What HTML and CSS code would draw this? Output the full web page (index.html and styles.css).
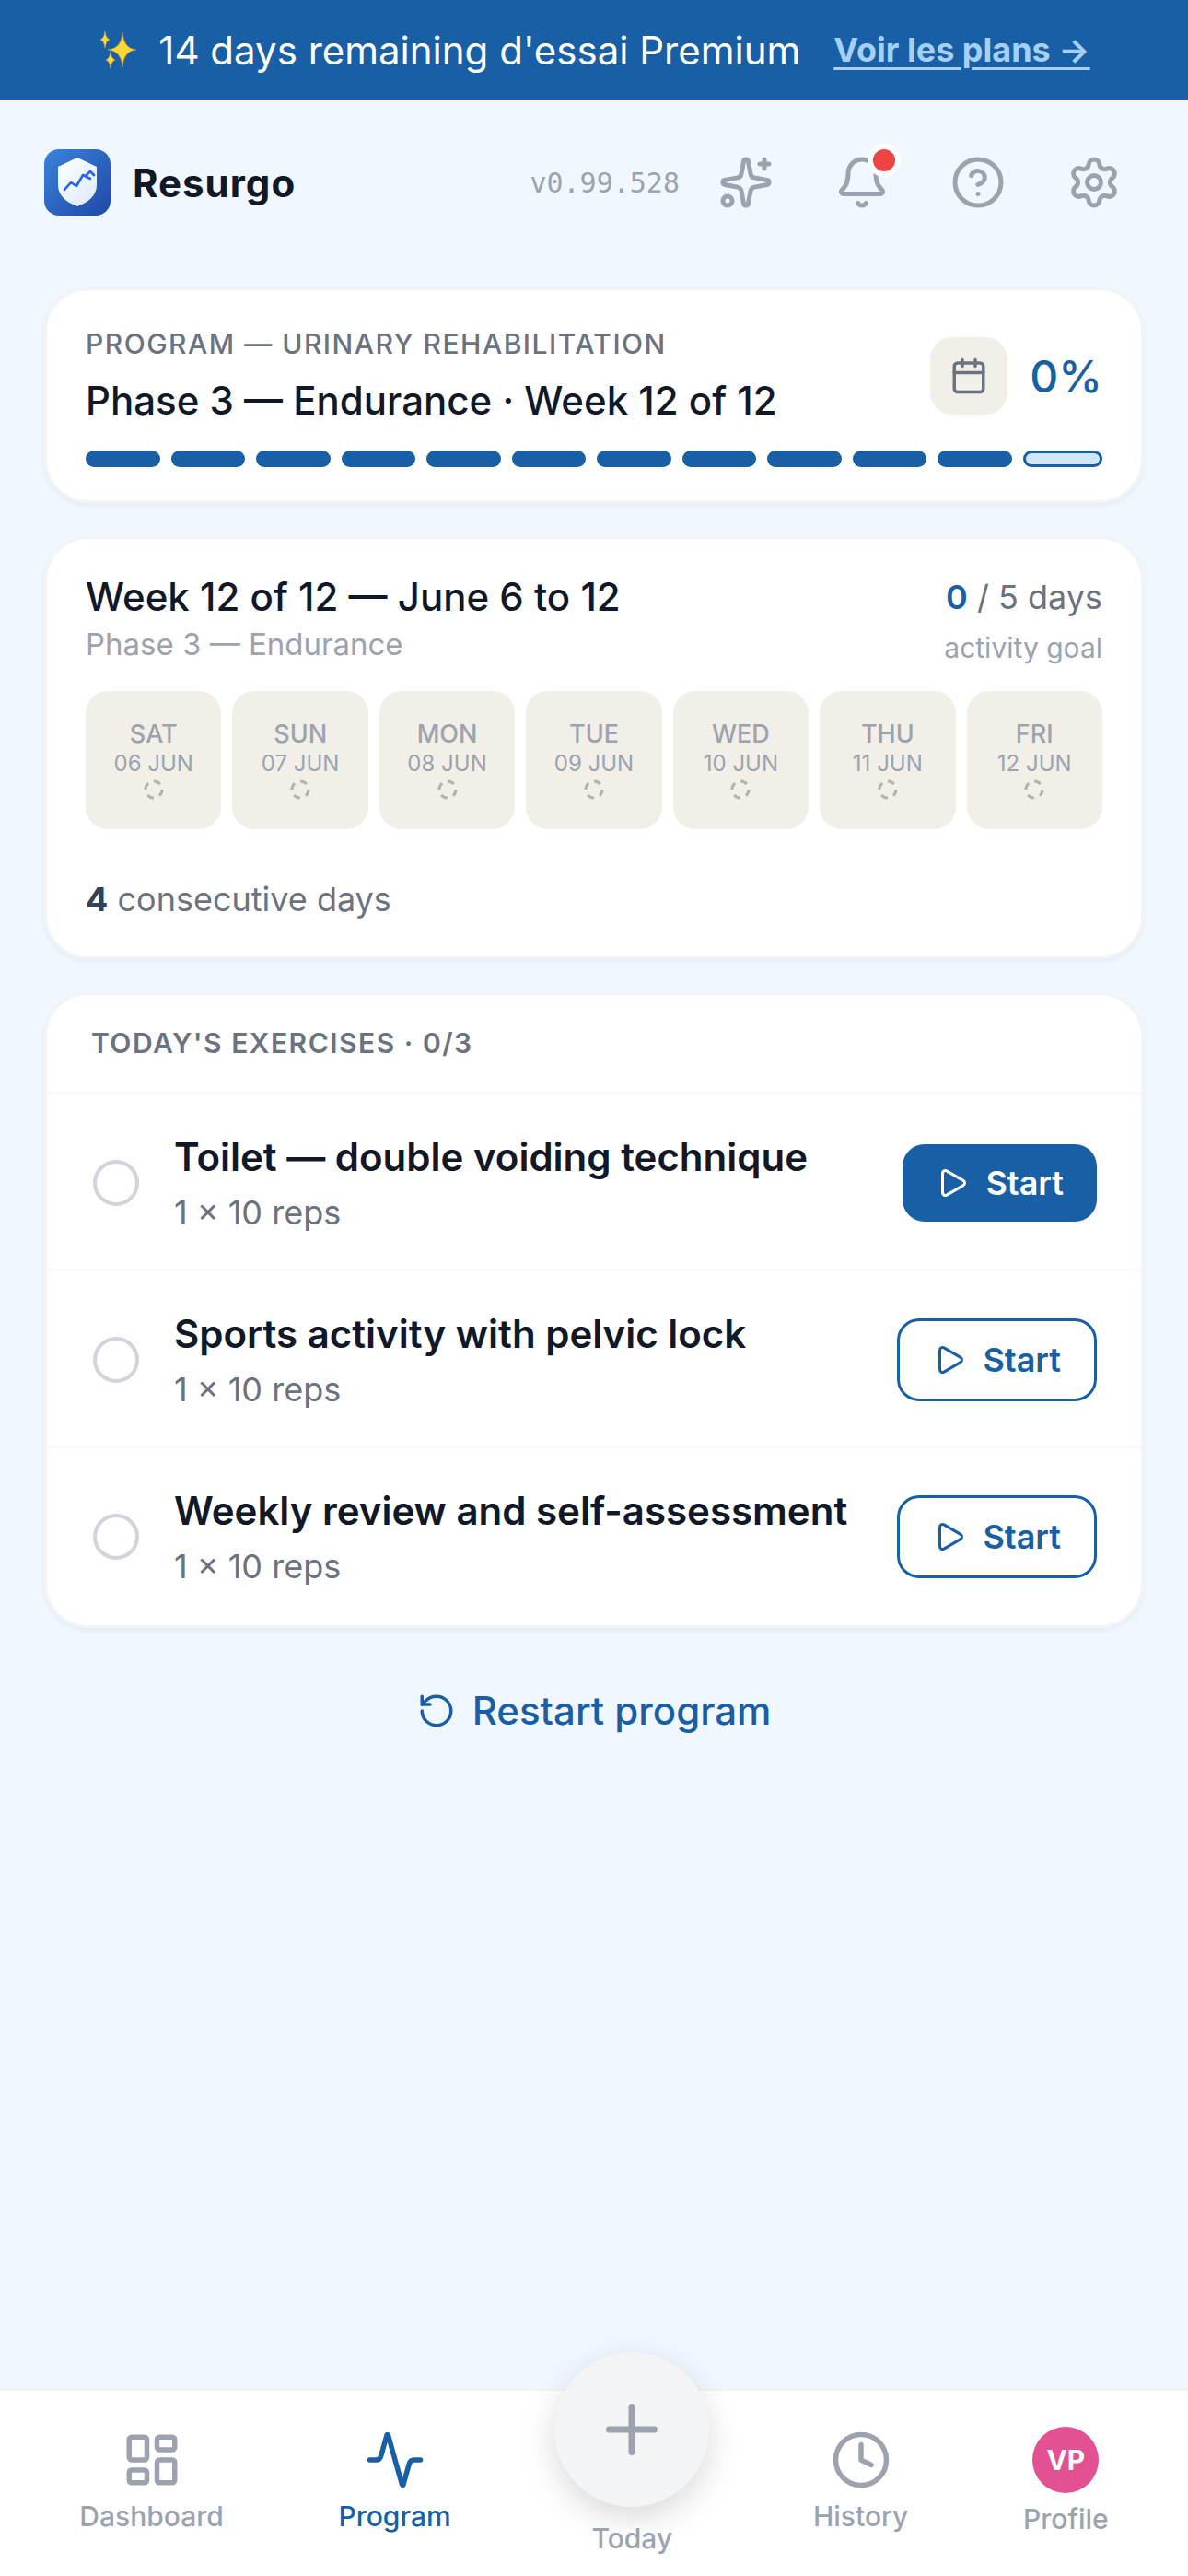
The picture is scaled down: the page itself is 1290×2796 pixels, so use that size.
FILE: index.html
```html
<!DOCTYPE html>
<html lang="en">

<head>
    <meta charset="UTF-8">
    <meta name="viewport" content="width=device-width, initial-scale=1.0">
    <title>Resurgo</title>
    <link rel="stylesheet" href="styles.css">
</head>

<body>
    <div class="banner">
        <svg class="sparkle" viewBox="0 0 42 42">
            <path d="M27 2Q28 20 42 21Q28 22 27 40Q26 22 11 21Q26 20 27 2Z" />
            <path d="M8 1Q9 9 13 10Q9 11 8 19Q7 11 3 10Q7 9 8 1Z" />
            <path d="M14 23Q15 31 19 32Q15 33 14 41Q13 33 9 32Q13 31 14 23Z" />
        </svg>
        <span>14 days remaining d'essai Premium</span>
        <a href="#">Voir les plans →</a>
    </div>

    <header class="header">
        <svg class="logo" viewBox="0 0 72 72">
            <defs>
                <linearGradient id="logoBg" x1="0" y1="0" x2="1" y2="1">
                    <stop offset="0" stop-color="#3b82de" />
                    <stop offset="1" stop-color="#1e49a6" />
                </linearGradient>
                <linearGradient id="shieldBg" x1="0" y1="0" x2="1" y2="1">
                    <stop offset="0" stop-color="#ffffff" />
                    <stop offset="1" stop-color="#dbeafe" />
                </linearGradient>
            </defs>
            <rect width="72" height="72" rx="16" fill="url(#logoBg)" />
            <path d="M36 10L57 20V40C57 52 47 59 36 63C25 59 15 52 15 40V20Z" fill="#1e3a8a" opacity=".25" />
            <path d="M36 9L57 19V39C57 51 47 58 36 62C25 58 15 51 15 39V19Z" fill="url(#shieldBg)" />
            <path d="M22 44L29 36L35 40L42 28L50 32M42 28L45 29L50 24L54 28" fill="none" stroke="#2563eb" stroke-width="2.6" stroke-linecap="round" stroke-linejoin="round" />
        </svg>
        <h1 class="brand">Resurgo</h1>
        <span class="version">v0.99.528</span>
        <button class="icon-btn" aria-label="What's new">
            <svg class="icon" viewBox="0 0 24 24">
                <path d="M11.017 2.814a1 1 0 0 1 1.966 0l1.051 5.558a2 2 0 0 0 1.594 1.594l5.558 1.051a1 1 0 0 1 0 1.966l-5.558 1.051a2 2 0 0 0-1.594 1.594l-1.051 5.558a1 1 0 0 1-1.966 0l-1.051-5.558a2 2 0 0 0-1.594-1.594l-5.558-1.051a1 1 0 0 1 0-1.966l5.558-1.051a2 2 0 0 0 1.594-1.594z" />
                <path d="M20 2v4M22 4h-4" />
                <circle cx="4" cy="20" r="2" />
            </svg>
        </button>
        <button class="icon-btn" aria-label="Notifications">
            <svg class="icon" viewBox="0 0 24 24">
                <path d="M10.268 21a2 2 0 0 0 3.464 0" />
                <path d="M3.262 15.326A1 1 0 0 0 4 17h16a1 1 0 0 0 .74-1.673C19.41 13.956 18 12.499 18 8A6 6 0 0 0 6 8c0 4.499-1.411 5.956-2.738 7.326" />
            </svg>
            <span class="dot"></span>
        </button>
        <button class="icon-btn" aria-label="Help">
            <svg class="icon" viewBox="0 0 24 24">
                <circle cx="12" cy="12" r="10" />
                <path d="M9.09 9a3 3 0 0 1 5.83 1c0 2-3 3-3 3M12 17h.01" />
            </svg>
        </button>
        <button class="icon-btn" aria-label="Settings">
            <svg class="icon" viewBox="0 0 24 24">
                <path d="M9.671 4.136a2.34 2.34 0 0 1 4.659 0 2.34 2.34 0 0 0 3.319 1.915 2.34 2.34 0 0 1 2.33 4.033 2.34 2.34 0 0 0 0 3.831 2.34 2.34 0 0 1-2.33 4.033 2.34 2.34 0 0 0-3.319 1.915 2.34 2.34 0 0 1-4.659 0 2.34 2.34 0 0 0-3.32-1.915 2.34 2.34 0 0 1-2.33-4.033 2.34 2.34 0 0 0 0-3.831A2.34 2.34 0 0 1 6.35 6.051a2.34 2.34 0 0 0 3.319-1.915" />
                <circle cx="12" cy="12" r="3" />
            </svg>
        </button>
    </header>

    <main class="main">
        <section class="card phase">
            <div class="phase-row">
                <div class="phase-text">
                    <p class="label">PROGRAM — URINARY REHABILITATION</p>
                    <h2 class="title">Phase 3 — Endurance · Week 12 of 12</h2>
                </div>
                <button class="calendar" aria-label="Calendar">
                    <svg class="icon" viewBox="0 0 24 24">
                        <path d="M8 2v4M16 2v4M3 10h18" />
                        <rect x="3" y="4" width="18" height="18" rx="2" />
                    </svg>
                </button>
                <span class="percent">0%</span>
            </div>
            <div class="bars">
                <span></span><span></span><span></span><span></span>
                <span></span><span></span><span></span><span></span>
                <span></span><span></span><span></span><span class="current"></span>
            </div>
        </section>

        <section class="card week">
            <div class="week-head">
                <div>
                    <h2 class="week-title">Week 12 of 12 — June 6 to 12</h2>
                    <p class="week-sub">Phase 3 — Endurance</p>
                </div>
                <div class="goal">
                    <p class="goal-days"><b>0</b> / 5 days</p>
                    <p class="goal-text">activity goal</p>
                </div>
            </div>
            <div class="days">
                <div class="day">
                    <span class="day-name">SAT</span>
                    <span class="day-date">06 JUN</span>
                    <svg viewBox="0 0 24 24"><circle cx="12" cy="12" r="9" /></svg>
                </div>
                <div class="day">
                    <span class="day-name">SUN</span>
                    <span class="day-date">07 JUN</span>
                    <svg viewBox="0 0 24 24"><circle cx="12" cy="12" r="9" /></svg>
                </div>
                <div class="day">
                    <span class="day-name">MON</span>
                    <span class="day-date">08 JUN</span>
                    <svg viewBox="0 0 24 24"><circle cx="12" cy="12" r="9" /></svg>
                </div>
                <div class="day">
                    <span class="day-name">TUE</span>
                    <span class="day-date">09 JUN</span>
                    <svg viewBox="0 0 24 24"><circle cx="12" cy="12" r="9" /></svg>
                </div>
                <div class="day">
                    <span class="day-name">WED</span>
                    <span class="day-date">10 JUN</span>
                    <svg viewBox="0 0 24 24"><circle cx="12" cy="12" r="9" /></svg>
                </div>
                <div class="day">
                    <span class="day-name">THU</span>
                    <span class="day-date">11 JUN</span>
                    <svg viewBox="0 0 24 24"><circle cx="12" cy="12" r="9" /></svg>
                </div>
                <div class="day">
                    <span class="day-name">FRI</span>
                    <span class="day-date">12 JUN</span>
                    <svg viewBox="0 0 24 24"><circle cx="12" cy="12" r="9" /></svg>
                </div>
            </div>
            <p class="streak"><b>4</b> consecutive days</p>
        </section>

        <section class="card exercises">
            <h3 class="ex-head">TODAY'S EXERCISES · 0/3</h3>
            <div class="ex-row">
                <input type="checkbox" id="ex1" class="check">
                <label for="ex1" class="ex-text">
                    <span class="ex-name">Toilet — double voiding technique</span>
                    <span class="ex-reps">1 × 10 reps</span>
                </label>
                <button class="start primary">
                    <svg class="icon" viewBox="0 0 24 24">
                        <path d="M5 5a2 2 0 0 1 3.008-1.728l11.997 6.998a2 2 0 0 1 .003 3.458l-12 7A2 2 0 0 1 5 19z" />
                    </svg>
                    Start
                </button>
            </div>
            <div class="ex-row">
                <input type="checkbox" id="ex2" class="check">
                <label for="ex2" class="ex-text">
                    <span class="ex-name">Sports activity with pelvic lock</span>
                    <span class="ex-reps">1 × 10 reps</span>
                </label>
                <button class="start">
                    <svg class="icon" viewBox="0 0 24 24">
                        <path d="M5 5a2 2 0 0 1 3.008-1.728l11.997 6.998a2 2 0 0 1 .003 3.458l-12 7A2 2 0 0 1 5 19z" />
                    </svg>
                    Start
                </button>
            </div>
            <div class="ex-row">
                <input type="checkbox" id="ex3" class="check">
                <label for="ex3" class="ex-text">
                    <span class="ex-name">Weekly review and self-assessment</span>
                    <span class="ex-reps">1 × 10 reps</span>
                </label>
                <button class="start">
                    <svg class="icon" viewBox="0 0 24 24">
                        <path d="M5 5a2 2 0 0 1 3.008-1.728l11.997 6.998a2 2 0 0 1 .003 3.458l-12 7A2 2 0 0 1 5 19z" />
                    </svg>
                    Start
                </button>
            </div>
        </section>

        <button class="restart">
            <svg class="icon" viewBox="0 0 24 24">
                <path d="M3 12a9 9 0 1 0 9-9 9.75 9.75 0 0 0-6.74 2.74L3 8" />
                <path d="M3 3v5h5" />
            </svg>
            Restart program
        </button>
    </main>

    <nav class="nav">
        <a href="#" class="nav-item">
            <svg class="icon" viewBox="0 0 24 24">
                <rect x="3" y="3" width="7" height="9" rx="1" />
                <rect x="14" y="3" width="7" height="5" rx="1" />
                <rect x="14" y="12" width="7" height="9" rx="1" />
                <rect x="3" y="16" width="7" height="5" rx="1" />
            </svg>
            Dashboard
        </a>
        <a href="#" class="nav-item active">
            <svg class="icon" viewBox="0 0 24 24">
                <path d="M22 12h-2.48a2 2 0 0 0-1.93 1.46l-2.35 8.36a.25.25 0 0 1-.48 0L9.24 2.18a.25.25 0 0 0-.48 0l-2.35 8.36A2 2 0 0 1 4.49 12H2" />
            </svg>
            Program
        </a>
        <a href="#" class="nav-item today">
            <span class="plus">
                <svg class="icon" viewBox="0 0 24 24">
                    <path d="M5 12h14M12 5v14" />
                </svg>
            </span>
            Today
        </a>
        <a href="#" class="nav-item">
            <svg class="icon" viewBox="0 0 24 24">
                <circle cx="12" cy="12" r="10" />
                <path d="M12 6v6l4 2" />
            </svg>
            History
        </a>
        <a href="#" class="nav-item">
            <span class="avatar">VP</span>
            Profile
        </a>
    </nav>
</body>

</html>
```
FILE: styles.css
```css
* {
    box-sizing: border-box;
    margin: 0;
    padding: 0;
}

body {
    min-height: 100vh;
    display: flex;
    flex-direction: column;
    background: #f0f7ff;
    color: #111827;
    font-family: Inter, "Liberation Sans", sans-serif;
}

button {
    border: none;
    background: none;
    font-family: inherit;
    cursor: pointer;
}

.icon {
    display: block;
    flex: none;
    fill: none;
    stroke: currentColor;
    stroke-width: 2;
    stroke-linecap: round;
    stroke-linejoin: round;
}

/* trial banner */
.banner {
    display: flex;
    align-items: center;
    justify-content: center;
    gap: 24px;
    height: 108px;
    background: #185fa5;
    color: white;
    font-size: 42px;
}

.banner a {
    margin-left: 12px;
    color: #a5d0f5;
    font-size: 36px;
    font-weight: 700;
    text-decoration-thickness: 3px;
    text-underline-offset: 6px;
}

.sparkle {
    width: 42px;
    height: 42px;
    fill: #fdd835;
    stroke: #f4a62a;
    stroke-width: 0.5;
}

/* header */
.header {
    display: flex;
    align-items: center;
    gap: 18px;
    padding: 36px 48px;
}

.logo {
    width: 72px;
    height: 72px;
}

.brand {
    flex: 1;
    padding-left: 6px;
    font-size: 42px;
    font-weight: 700;
    letter-spacing: 1px;
}

.version {
    color: #9ca3af;
    font-family: "DejaVu Sans Mono", monospace;
    font-size: 30px;
}

.icon-btn {
    position: relative;
    display: flex;
    align-items: center;
    justify-content: center;
    width: 108px;
    height: 108px;
    color: #9ca3af;
}

.icon-btn .icon {
    width: 60px;
    height: 60px;
}

.dot {
    position: absolute;
    top: 12px;
    right: 12px;
    width: 36px;
    height: 36px;
    border: 6px solid white;
    border-radius: 50%;
    background: #ef4444;
}

/* cards */
.main {
    flex: 1;
    display: flex;
    flex-direction: column;
    gap: 36px;
    padding: 24px 48px;
}

.card {
    border: 3px solid #f3f4f6;
    border-radius: 48px;
    background: white;
    box-shadow: 0 3px 6px rgba(0, 0, 0, 0.05);
}

.phase,
.week {
    padding: 36px 42px;
}

.phase-row {
    display: flex;
    align-items: center;
    gap: 24px;
    margin-bottom: 24px;
}

.phase-text {
    flex: 1;
}

.label {
    margin-bottom: 9px;
    color: #6b7280;
    font-size: 30px;
    font-weight: 500;
    line-height: 45px;
    letter-spacing: 0.05em;
}

.title {
    font-size: 42px;
    font-weight: 500;
    line-height: 60px;
}

.calendar {
    display: flex;
    align-items: center;
    justify-content: center;
    width: 84px;
    height: 84px;
    border-radius: 24px;
    background: #f1efe8;
    color: #6b7280;
}

.calendar .icon {
    width: 42px;
    height: 42px;
}

.percent {
    color: #185fa5;
    font-size: 48px;
    font-weight: 500;
}

.bars {
    display: flex;
    gap: 12px;
}

.bars span {
    flex: 1;
    height: 18px;
    border-radius: 9px;
    background: #185fa5;
}

.bars .current {
    border: 3px solid #185fa5;
    background: #d0e6fa;
}

/* week */
.week-head {
    display: flex;
    justify-content: space-between;
    margin-bottom: 24px;
}

.week-title {
    font-size: 42px;
    font-weight: 500;
    line-height: 54px;
}

.week-sub {
    color: #9ca3af;
    font-size: 33px;
    line-height: 48px;
}

.goal {
    text-align: right;
}

.goal-days {
    margin-bottom: 6px;
    color: #6b7280;
    font-size: 36px;
    line-height: 54px;
}

.goal-days b {
    color: #185fa5;
    font-weight: 600;
}

.goal-text {
    color: #9ca3af;
    font-size: 30px;
    line-height: 45px;
}

.days {
    display: flex;
    gap: 12px;
}

.day {
    flex: 1;
    display: flex;
    flex-direction: column;
    align-items: center;
    justify-content: center;
    height: 150px;
    padding-bottom: 3px;
    border-radius: 24px;
    background: #f1efe8;
    color: #9ca3af;
}

.day-name {
    font-size: 27px;
    font-weight: 500;
    line-height: 36px;
}

.day-date {
    margin-bottom: 3px;
    font-size: 24px;
    line-height: 27px;
}

.day svg {
    width: 24px;
    height: 24px;
    fill: none;
    stroke: #b4b2a9;
    stroke-width: 3;
    stroke-dasharray: 7.5 6.6;
}

.streak {
    margin-top: 51px;
    color: #6b7280;
    font-size: 36px;
    line-height: 51px;
}

.streak b {
    color: #374151;
    font-weight: 700;
}

/* exercises */
.ex-head {
    padding: 30px 48px;
    border-bottom: 3px solid #f9fafb;
    color: #6b7280;
    font-size: 30px;
    font-weight: 600;
    line-height: 45px;
    letter-spacing: 0.05em;
}

.ex-row {
    display: flex;
    align-items: center;
    gap: 36px;
    min-height: 192px;
    padding: 0 48px;
    box-shadow: inset 0 -3px #f9fafb;
}

.ex-row:last-child {
    box-shadow: none;
}

.check {
    appearance: none;
    flex: none;
    width: 50px;
    height: 50px;
    margin: 0 2px;
    border: 4px solid #d1d5db;
    border-radius: 50%;
}

.check:checked {
    background: #185fa5;
}

.ex-text {
    flex: 1;
    display: flex;
    flex-direction: column;
    gap: 3px;
}

.ex-name {
    font-size: 42px;
    font-weight: 600;
    line-height: 60px;
}

.ex-reps {
    color: #6b7280;
    font-size: 36px;
    line-height: 54px;
}

.start {
    display: flex;
    align-items: center;
    gap: 18px;
    height: 90px;
    padding: 0 36px;
    border: 3px solid #185fa5;
    border-radius: 24px;
    color: #185fa5;
    font-size: 36px;
    font-weight: 600;
}

.start.primary {
    height: 84px;
    border: none;
    background: #185fa5;
    color: white;
}

.start .icon {
    width: 36px;
    height: 36px;
}

.restart {
    display: flex;
    align-items: center;
    justify-content: center;
    gap: 18px;
    padding: 24px;
    color: #185fa5;
    font-size: 42px;
    font-weight: 500;
    line-height: 60px;
}

.restart .icon {
    width: 42px;
    height: 42px;
}

/* bottom nav */
.nav {
    position: sticky;
    bottom: 0;
    display: flex;
    align-items: center;
    justify-content: space-around;
    height: 204px;
    padding: 0 24px;
    border-top: 3px solid #f3f4f6;
    background: white;
}

.nav-item {
    display: flex;
    flex-direction: column;
    align-items: center;
    gap: 6px;
    padding: 0 12px;
    color: #9ca3af;
    font-size: 30px;
    font-weight: 500;
    line-height: 45px;
    text-decoration: none;
}

.nav-item .icon {
    width: 66px;
    height: 66px;
}

.nav-item.active {
    color: #185fa5;
}

.nav-item.today {
    gap: 12px;
    margin-top: -60px;
    padding: 0;
}

.plus {
    display: flex;
    align-items: center;
    justify-content: center;
    width: 168px;
    height: 168px;
    border-radius: 50%;
    background: #f3f4f6;
    box-shadow: 0 12px 36px rgba(0, 0, 0, 0.15);
}

.nav-item .plus .icon {
    width: 84px;
    height: 84px;
}

.avatar {
    display: flex;
    align-items: center;
    justify-content: center;
    width: 72px;
    height: 72px;
    border-radius: 50%;
    background: #e35192;
    color: white;
    font-weight: 700;
}
```
